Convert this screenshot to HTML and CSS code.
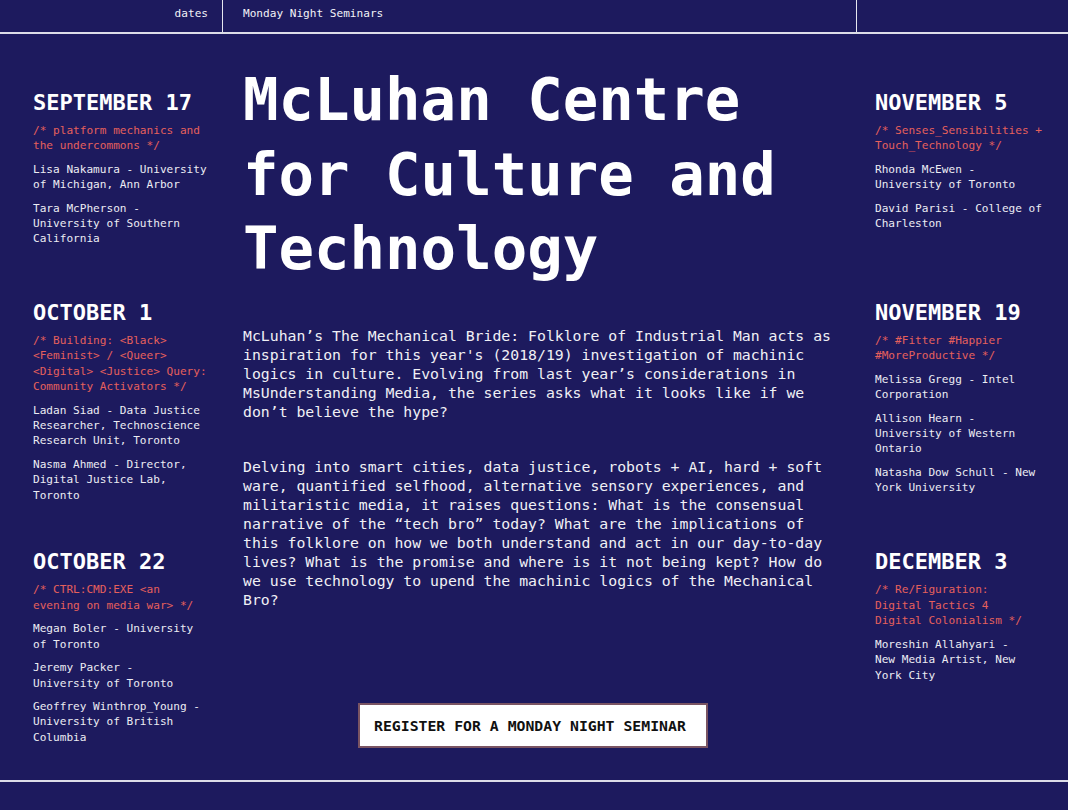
FILE: index.html
```html
<!DOCTYPE html>
<html lang="en">
<head>
<meta charset="utf-8">
<title>McLuhan Centre for Culture and Technology — Monday Night Seminars</title>
<link rel="stylesheet" href="styles.css">
</head>
<body>
<header class="topbar">
  <div class="cell cell-dates">dates</div>
  <div class="cell cell-title">Monday Night Seminars</div>
  <div class="cell cell-end"></div>
</header>

<main class="program">
  <div class="col col-left">
    <section class="date">
      <h2>SEPTEMBER 17</h2>
      <p class="topic">/* platform mechanics and the undercommons */</p>
      <p class="speaker">Lisa Nakamura - University of Michigan, Ann Arbor</p>
      <p class="speaker">Tara McPherson - University of Southern California</p>
    </section>
    <section class="date">
      <h2>OCTOBER 1</h2>
      <p class="topic">/* Building: &lt;Black&gt; &lt;Feminist&gt; / &lt;Queer&gt; &lt;Digital&gt; &lt;Justice&gt; Query: Community Activators */</p>
      <p class="speaker">Ladan Siad - Data Justice Researcher, Technoscience Research Unit, Toronto</p>
      <p class="speaker">Nasma Ahmed - Director, Digital Justice Lab, Toronto</p>
    </section>
    <section class="date date-mid">
      <h2>OCTOBER 22</h2>
      <p class="topic">/* CTRL:CMD:EXE &lt;an evening on media war&gt; */</p>
      <p class="speaker">Megan Boler - University of Toronto</p>
      <p class="speaker">Jeremy Packer - University of Toronto</p>
      <p class="speaker">Geoffrey Winthrop_Young - University of British Columbia</p>
    </section>
  </div>

  <div class="col col-center">
    <h1 class="title">McLuhan Centre for Culture and Technology</h1>
    <p class="intro">McLuhan’s The Mechanical Bride: Folklore of Industrial Man acts as inspiration for this year's (2018/19) investigation of machinic logics in culture. Evolving from last year’s considerations in MsUnderstanding Media, the series asks what it looks like if we don’t believe the hype?</p>
    <p class="intro">Delving into smart cities, data justice, robots + AI, hard + soft ware, quantified selfhood, alternative sensory experiences, and militaristic media, it raises questions: What is the consensual narrative of the “tech bro” today? What are the implications of this folklore on how we both understand and act in our day-to-day lives? What is the promise and where is it not being kept? How do we use technology to upend the machinic logics of the Mechanical Bro?</p>
    <a class="cta" href="#register">REGISTER FOR A MONDAY NIGHT SEMINAR</a>
  </div>

  <div class="col col-right">
    <section class="date">
      <h2>NOVEMBER 5</h2>
      <p class="topic">/* Senses_Sensibilities + Touch_Technology */</p>
      <p class="speaker">Rhonda McEwen - University of Toronto</p>
      <p class="speaker">David Parisi - College of Charleston</p>
    </section>
    <section class="date">
      <h2>NOVEMBER 19</h2>
      <p class="topic">/* #Fitter #Happier #MoreProductive */</p>
      <p class="speaker">Melissa Gregg - Intel Corporation</p>
      <p class="speaker">Allison Hearn - University of Western Ontario</p>
      <p class="speaker">Natasha Dow Schull - New York University</p>
    </section>
    <section class="date date-narrow">
      <h2>DECEMBER 3</h2>
      <p class="topic">/* Re/Figuration: Digital Tactics 4 Digital Colonialism */</p>
      <p class="speaker">Moreshin Allahyari - New Media Artist, New York City</p>
    </section>
  </div>
</main>

<footer class="bottombar"></footer>
</body>
</html>
```

FILE: styles.css
```css
html, body {
  margin: 0;
  padding: 0;
}

body {
  background: #1d1a5e;
  color: #ececf3;
  font-family: "DejaVu Sans Mono", "Liberation Mono", monospace;
  min-height: 810px;
}

/* ---------- top bar ---------- */
.topbar {
  display: flex;
  height: 32px;
  border-bottom: 2px solid #dcdce8;
  font-size: 11.1px;
  line-height: 27px;
  color: #f2f2f7;
}

.cell {
  box-sizing: border-box;
  height: 32px;
}

.cell-dates {
  flex: 0 0 223px;
  text-align: right;
  padding-right: 14px;
  border-right: 1px solid #e6e6ef;
}

.cell-title {
  flex: 0 0 634px;
  padding-left: 20px;
  border-right: 1px solid #e6e6ef;
}

.cell-end {
  flex: 1 1 auto;
}

/* ---------- main program ---------- */
.program {
  display: flex;
  align-items: flex-start;
  padding: 29.4px 0 32px 33px;
}

.col-left {
  flex: 0 0 177px;
  margin-right: 33px;
  padding-top: 26.6px;
}

.col-center {
  flex: 0 0 602px;
  display: flex;
  flex-direction: column;
}

.col-right {
  flex: 0 0 170px;
  margin-left: 30px;
  padding-top: 26.6px;
}

/* date sections */
.date:nth-child(1) {
  min-height: 210px;
}

.date:nth-child(2) {
  min-height: 249.5px;
}

.date-mid {
  max-width: 170px;
}

.date-narrow {
  max-width: 154px;
}

.date h2 {
  margin: 0 0 7px;
  font-size: 22px;
  line-height: 26px;
  font-weight: 700;
  color: #ffffff;
}

.date p {
  margin: 0 0 8px;
  font-size: 11.1px;
  line-height: 15.4px;
}

.date p:last-child {
  margin-bottom: 0;
}

.topic {
  color: #e6605c;
}

.speaker {
  color: #ececf3;
}

/* center */
.title {
  margin: 0;
  font-size: 59px;
  line-height: 74.5px;
  font-weight: 700;
  color: #ffffff;
}

.intro {
  max-width: 67.5ch;
  margin: 39.4px 0 0;
  font-size: 14.8px;
  line-height: 19px;
  color: #f0f0f5;
}

.intro + .intro {
  margin-top: 36px;
}

.cta {
  align-self: flex-start;
  margin: 93.9px 0 0 115px;
  padding: 11px 20px 11px 14px;
  background: #ffffff;
  border: 2px solid #7a5462;
  color: #111111;
  font-size: 14.8px;
  line-height: 19px;
  font-weight: 700;
  text-decoration: none;
}

/* bottom */
.bottombar {
  border-top: 2px solid #dcdce8;
  height: 28px;
}
```
